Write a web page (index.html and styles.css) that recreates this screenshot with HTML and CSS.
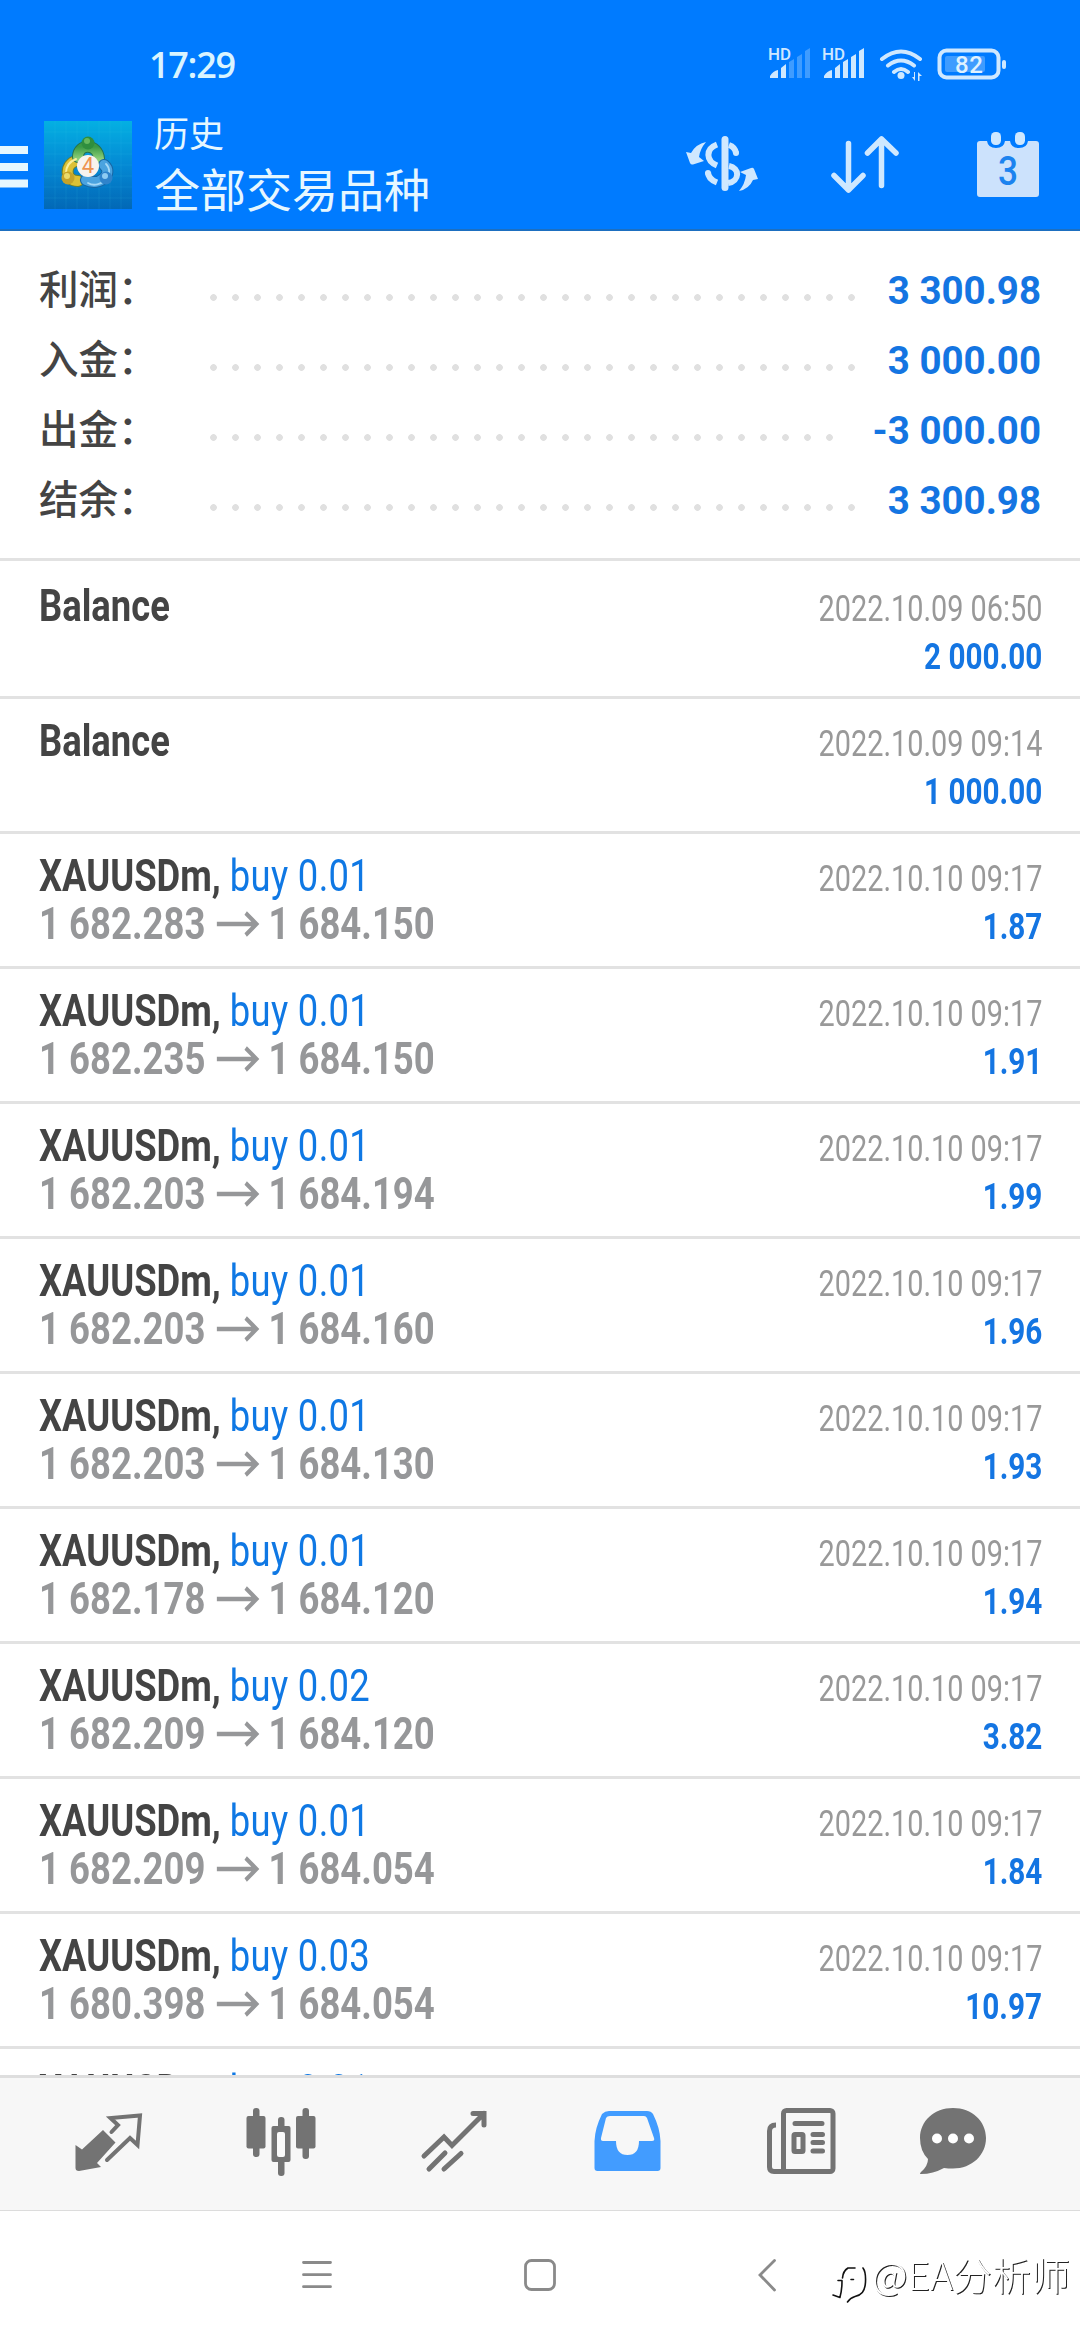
FILE: index.html
```html
<!DOCTYPE html>
<html lang="zh-CN">
<head>
<meta charset="utf-8">
<title>历史</title>
<link rel="stylesheet" href="styles.css">
</head>
<body>
<div class="screen">
  <header class="top">
    <div class="status">
      <span class="clock">17:29</span>
      <svg class="status-icons" width="240" height="40" viewBox="768 44 240 40" fill="#cfe8ff">
        <text class="hd" x="768" y="59.500" textLength="23" lengthAdjust="spacingAndGlyphs">HD</text>
        <path d="M770 78v-2q3-5 8-6v8zM781 68l5-4v14h-5z"/>
        <path opacity=".3" d="M789 62l5-3v19h-5zM797 57l5-3v24h-5zM805 51l5-3v30h-5z"/>
        <text class="hd" x="822" y="59.500" textLength="23" lengthAdjust="spacingAndGlyphs">HD</text>
        <path d="M824 78v-2q3-5 8-6v8zM835 68l5-4v14h-5zM843 62l5-3v19h-5zM851 57l5-3v24h-5zM859 51l5-3v30h-5z"/>
        <g fill="none" stroke="#cfe8ff" stroke-width="4" stroke-linecap="round"><path d="M882 59q19-15 38 0M888 65.500q13-10 26 0M894 72q7-6 14 0"/></g>
        <circle cx="901" cy="75.500" r="3.500"/>
        <path d="M915 72v9l-3-4h2v-5zM918 81v-9l4 4h-2.500v5z"/>
        <rect x="939.500" y="50.500" width="59" height="27" rx="7" fill="none" stroke="#cfe8ff" stroke-width="4"/>
        <rect x="945" y="56" width="40" height="16" rx="2" opacity=".3"/>
        <rect x="1002" y="60" width="4" height="9" rx="2"/>
        <text class="pct" x="955" y="73" textLength="28">82</text>
      </svg>
    </div>
    <div class="bar">
      <svg class="burger" width="28" height="88" viewBox="0 0 28 88" fill="#e6f7ff"><path d="M0 25h28v8H0zM0 42h28v8H0zM0 58.500h28v8H0z"/></svg>
      <svg class="logo" width="88" height="88" viewBox="0 0 88 88">
        <defs>
          <linearGradient id="bg" x1="0" y1="0" x2="0" y2="1"><stop offset="0" stop-color="#04b0e2"/><stop offset=".5" stop-color="#0489d4"/><stop offset="1" stop-color="#0268b6"/></linearGradient>
          <linearGradient id="gn" x1="0" y1="0" x2="0" y2="1"><stop offset="0" stop-color="#3a9a45"/><stop offset="1" stop-color="#8fd07a"/></linearGradient>
        </defs>
        <rect width="88" height="88" fill="url(#bg)"/>
        <path d="M11 0v88M22 0v88M33 0v88M44 0v88M55 0v88M66 0v88M77 0v88M0 11h88M0 22h88M0 33h88M0 44h88M0 55h88M0 66h88M0 77h88" stroke="#4ac4ee" stroke-opacity=".12"/>
        <g fill="none" stroke-linecap="round">
          <path d="M34 60C20 60 21 43 32 40" stroke="#71802a" stroke-width="12"/>
          <path d="M34 60C20 60 21 43 32 40" stroke="#dcc136" stroke-width="10"/>
          <path d="M34 36C34 22 54 22 55 38" stroke="#25704c" stroke-width="12"/>
          <path d="M34 36C34 22 54 22 55 38" stroke="url(#gn)" stroke-width="10"/>
          <path d="M60 44C70 52 56 66 42 59" stroke="#1766a4" stroke-width="12"/>
          <path d="M60 44C70 52 56 66 42 59" stroke="#4ba3df" stroke-width="10"/>
          <path d="M62 43C72 53 56 69 44 62" stroke="#a5d8f6" stroke-width="1.800"/>
          <path d="M22 52Q22 42 32 38" stroke="#f8ee9c" stroke-width="2"/>
        </g>
        <circle cx="44" cy="22" r="6.500" fill="#2f8e3e"/><circle cx="43" cy="20" r="3" fill="#65b85f"/>
        <circle cx="24" cy="57" r="6.500" fill="#c5a32a"/><circle cx="23" cy="55" r="3" fill="#eadb6a"/>
        <circle cx="62" cy="57" r="6.500" fill="#2f83cb"/><circle cx="61" cy="55" r="3" fill="#8ecbf2"/>
        <circle cx="44" cy="45" r="11" fill="#f8f3ee"/>
        <text class="four" x="44" y="52" text-anchor="middle">4</text>
      </svg>
      <div class="titles"><span class="small">历史</span><span class="big">全部交易品种</span></div>
      <svg class="actions" width="370" height="80" viewBox="680 125 370 80" fill="#cfe8ff">
        <rect x="721.500" y="136" width="7" height="55" rx="3.500"/>
        <g fill="none" stroke="#cfe8ff" stroke-width="6">
          <path d="M717 144.500C705 149 706 161 717 165.500M708 172Q708 179 717 182.500"/>
          <path d="M729 145Q735 147 736 153M729 166C740 168 740 181 728 183"/>
        </g>
        <circle cx="708" cy="173" r="3"/><circle cx="736" cy="153" r="3"/>
        <path d="M706 142Q696 144 691 153L686 152L690 163Q691 165 693 164.500L704 161L699 157Q700 149 706 142z"/>
        <path d="M739 191Q749 189 753 180L758 179L754 169Q753 167 751 168L740 172L746 175Q745 184 739 191z"/>
        <g fill="none" stroke="#cfe8ff" stroke-width="5.500" stroke-linecap="round" stroke-linejoin="round"><path d="M848.500 143.500V190M834 175.500L848.500 190L863 175.500M881.500 185.500V139M867.500 153L881.500 139L896 153"/></g>
        <path fill="#cce2fc" d="M980 141h7q1 7 9 7t9-7h5q1 7 9 7t9-7h8a3 3 0 0 1 3 3v50a3 3 0 0 1-3 3h-56a3 3 0 0 1-3-3v-50a3 3 0 0 1 3-3z"/>
        <rect x="991" y="132" width="10" height="13" rx="4.500"/><rect x="1015" y="132" width="10" height="13" rx="4.500"/>
        <text class="day" x="1008" y="185" text-anchor="middle" textLength="20" lengthAdjust="spacingAndGlyphs">3</text>
      </svg>
    </div>
  </header>

  <section class="summary">
    <div class="sum"><span class="lab">利润：</span><i class="dots"></i><b>3 300.98</b></div>
    <div class="sum"><span class="lab">入金：</span><i class="dots"></i><b>3 000.00</b></div>
    <div class="sum"><span class="lab">出金：</span><i class="dots short"></i><b>-3 000.00</b></div>
    <div class="sum"><span class="lab">结余：</span><i class="dots"></i><b>3 300.98</b></div>
  </section>

  <main class="list" id="list"></main>

  <nav class="tabs">
    <svg width="1080" height="132" viewBox="0 2078 1080 132" fill="#737373">
      <path d="M103 2130L115.500 2142.500L97 2163L101 2167L79 2171Q75.500 2171 75.500 2168V2145L82 2149.500z"/>
      <path d="M111.500 2132L118 2125L110.500 2118L140 2115.500L137.500 2145L130 2138L107 2160" fill="none" stroke="#737373" stroke-width="4" stroke-linecap="round"/>
      <rect x="253" y="2108" width="6.500" height="49" rx="3"/><rect x="246.500" y="2116" width="19" height="32.500" rx="2"/>
      <rect x="278" y="2117" width="6.500" height="59" rx="3"/><rect x="271.500" y="2126" width="19" height="36" rx="2"/><rect x="277" y="2132" width="8" height="25" rx="2" fill="#fafafa"/>
      <rect x="302.500" y="2108" width="6.500" height="51" rx="3"/><rect x="296" y="2116" width="19.500" height="32.500" rx="2"/>
      <path d="M424 2156L444 2137L452 2145.500L484 2113.500M473 2113.500H484V2125M429 2169L445 2153M444 2169L461 2153.500" fill="none" stroke="#737373" stroke-width="5" stroke-linecap="round"/>
      <path fill="#429cff" fill-rule="evenodd" d="M609 2111h38q4 0 6 3q7 14 7.500 27v27q0 3-3 3h-60q-3 0-3-3v-27q.5-13 7.500-27q3-3 7-3zM610 2116q-3 0-4 2l-5 20q-.5 3 2 3h13q0 14 11.500 14t11.500-14h13q3 0 2-3l-7-20q-1-2-3-2z"/>
      <g fill="none" stroke="#737373" stroke-width="5">
        <rect x="783.500" y="2110.500" width="49.500" height="61" rx="3"/>
        <path d="M776 2125Q769.500 2125 769.500 2131V2167Q769.500 2171.500 774 2171.500H786"/>
        <path d="M795 2123.500H822M813 2134.500H822.500M813 2142.500H822.500M813 2151H822.500" stroke-linecap="round"/>
        <rect x="794" y="2134.500" width="9" height="17" rx="1"/>
      </g>
      <path d="M953 2108C972 2108 986 2121 986 2138S972 2168.500 953 2168.500Q948 2168.500 944 2168Q933 2174 921 2174Q919 2174 921 2172Q928 2166 928 2159Q920 2151 920 2138C920 2121 934 2108 953 2108z"/>
      <g fill="#fff"><circle cx="937" cy="2138.500" r="5"/><circle cx="953" cy="2138.500" r="5"/><circle cx="969" cy="2138.500" r="5"/></g>
    </svg>
  </nav>
  <div class="system">
    <svg width="1080" height="129" viewBox="0 2211 1080 129" fill="none" stroke="#8a8a8a" stroke-width="2.800" stroke-linecap="round">
      <path d="M303.500 2262.500H330.500M303.500 2274.700H330.500M303.500 2286.700H330.500"/>
      <rect x="525.500" y="2260.500" width="29" height="29" rx="6"/>
      <path d="M774.500 2260.500L760 2275L774.500 2290"/>
      <g class="wm" stroke="none" fill="#fff">
        <text x="872" y="2290" textLength="198" lengthAdjust="spacingAndGlyphs">@EA分析师</text>
      </g>
      <g stroke="#111" stroke-width="1.600">
        <path d="M848 2268H855M848 2268Q843 2271 842.500 2278M842 2281Q842 2290 840 2297M851 2279.500H853.500M838 2280.500H842M833 2295L840 2297.500"/>
        <path d="M863 2268Q866 2272 865.500 2282C865 2292 861 2295 855 2296.500Q850 2298 847.500 2302"/>
      </g>
    </svg>
  </div>
</div>
<script src="app.js"></script>
</body>
</html>
```
FILE: styles.css
```css
* { box-sizing: border-box; }
body { margin: 0; background: #fff; font-family: Roboto, "Noto Sans CJK SC", sans-serif; }
.screen { width: 1080px; height: 2340px; overflow: hidden; display: flex; flex-direction: column; background: #fff; }
.top { height: 231px; flex: none; background: #007bff; border-bottom: 2px solid #1d6fc0; color: #e6f7ff; }
.status { height: 121px; padding: 44px 72px 0 149px; display: flex; justify-content: space-between; }
.clock { margin-top: -1px; font: 600 36px/44px "Open Sans", sans-serif; letter-spacing: -1.3px; color: #d9f4ff; }
.hd { font: 500 16px Roboto, sans-serif; }
.pct { font: 500 24px Roboto, sans-serif; fill: #e0f2ff; }
.bar { height: 88px; display: flex; }
.logo { margin-left: 16px; flex: none; }
.four { font: 22px Roboto, sans-serif; fill: #ee9350; }
.titles { margin: -15px 0 0 22px; display: flex; flex-direction: column; white-space: nowrap; font-family: "Noto Sans CJK SC", sans-serif; }
.small { font-size: 35px; line-height: 52px; }
.big { font-size: 46px; line-height: 58px; }
.actions { margin: 4px 30px 0 auto; flex: none; }
.day { font: 500 40px Roboto, sans-serif; fill: #1c83ef; }
.summary { height: 333px; flex: none; padding: 23px 39px 0 39px; position: relative; border-bottom: 3px solid #fff; }
.summary::after { content: ""; position: absolute; left: 0; right: 0; bottom: 0; height: 3px; background: #e2e2e2; }
.sum { height: 70px; display: flex; align-items: center; }
.lab { width: 170px; font: 500 39.500px/66px "Noto Sans CJK SC", sans-serif; height: 70px; color: #444; }
.dots { width: 660px; height: 7px; margin-top: 16px; background: radial-gradient(circle at 4.500px 3.500px, #e0e0e0 3px, transparent 3.700px) 0 0 / 22px 7px; }
.dots.short { width: 638px; }
.sum b { margin-left: auto; height: 70px; white-space: nowrap; font: 700 38.500px/73px Roboto, sans-serif; color: #1475e2; }
.list { height: 1511px; flex: none; overflow: hidden; }
.row { height: 135px; border-bottom: 3px solid #e2e2e2; display: flex; justify-content: space-between; padding: 18px 38px 0 39px; white-space: nowrap; }
.left, .right { display: flex; flex-direction: column; }
.right { align-items: flex-end; padding-top: 3px; }
.row span { line-height: 49px; height: 48px; }
.name { font-size: 44px; font-weight: 700; color: #444; transform: scaleX(.827); transform-origin: 0 50%; }
.name em { font-style: normal; font-weight: 400; color: #0f78e4; letter-spacing: .4px; }
.price { display: flex; align-items: center; font-size: 44px; font-weight: 700; color: #969799; transform: scaleX(.83); transform-origin: 0 50%; }
.price svg { margin: 0 10px 0 14px; }
.date { font-size: 36px; color: #999; transform: scaleX(.801); transform-origin: 100% 50%; }
.amount { font-size: 36px; font-weight: 700; color: #1475e2; transform: scaleX(.825); transform-origin: 100% 50%; }
.tabs { height: 136px; flex: none; background: #f7f7f7; border-top: 3px solid #dedede; border-bottom: 1px solid #dcdcdc; }
.tabs svg, .system svg { display: block; }
.system { height: 129px; flex: none; }
.wm { font: 300 38px "Noto Sans CJK SC", sans-serif; filter: drop-shadow(1px 1px 0 #222); }
```
FILE: app.js
```js
const rows = [
  ["Balance", "", "", "", "2022.10.09 06:50", "2 000.00"],
  ["Balance", "", "", "", "2022.10.09 09:14", "1 000.00"],
  ["XAUUSDm,", "buy 0.01", "1 682.283", "1 684.150", "2022.10.10 09:17", "1.87"],
  ["XAUUSDm,", "buy 0.01", "1 682.235", "1 684.150", "2022.10.10 09:17", "1.91"],
  ["XAUUSDm,", "buy 0.01", "1 682.203", "1 684.194", "2022.10.10 09:17", "1.99"],
  ["XAUUSDm,", "buy 0.01", "1 682.203", "1 684.160", "2022.10.10 09:17", "1.96"],
  ["XAUUSDm,", "buy 0.01", "1 682.203", "1 684.130", "2022.10.10 09:17", "1.93"],
  ["XAUUSDm,", "buy 0.01", "1 682.178", "1 684.120", "2022.10.10 09:17", "1.94"],
  ["XAUUSDm,", "buy 0.02", "1 682.209", "1 684.120", "2022.10.10 09:17", "3.82"],
  ["XAUUSDm,", "buy 0.01", "1 682.209", "1 684.054", "2022.10.10 09:17", "1.84"],
  ["XAUUSDm,", "buy 0.03", "1 680.398", "1 684.054", "2022.10.10 09:17", "10.97"],
  ["XAUUSDm,", "buy 0.01", "", "", "", ""]
];
const arrow = '<svg width="52" height="26" viewBox="0 0 52 26" fill="none" stroke="#969799" stroke-width="4.500"><path d="M0 13H48M35 2L48 13L35 24"/></svg>';
document.getElementById("list").innerHTML = rows.map(([n, side, a, b, d, v]) =>
  `<div class="row"><div class="left"><span class="name">${n} <em>${side}</em></span>` +
  (a ? `<span class="price">${a}${arrow}${b}</span>` : "") +
  `</div><div class="right"><span class="date">${d}</span><span class="amount">${v}</span></div></div>`).join("");
```
